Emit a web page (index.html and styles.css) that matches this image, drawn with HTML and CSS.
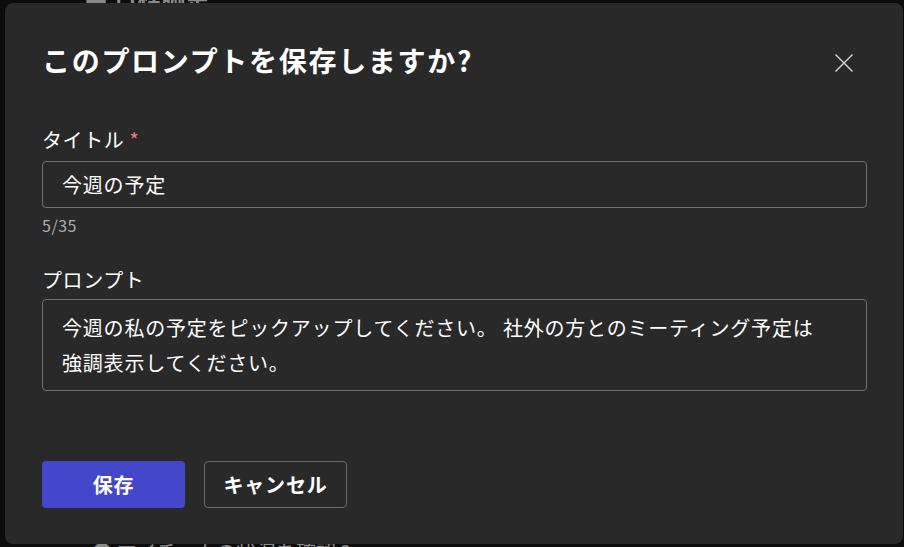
FILE: index.html
```html
<!DOCTYPE html>
<html lang="ja">
<head>
<meta charset="utf-8">
<link rel="stylesheet" href="styles.css">
</head>
<body>
<div class="backdrop">
  <div class="bg-line bg-top">■ 日程調整</div>
  <div class="bg-line bg-bottom">● マイチームの状況を確認 2</div>
</div>
<div class="dialog" role="dialog">
  <div class="header">
    <h1 class="title">このプロンプトを保存しますか?</h1>
    <button class="close" aria-label="閉じる">
      <svg width="20" height="20" viewBox="0 0 20 20"><path d="M1.5 1.5 L18.5 18.5 M18.5 1.5 L1.5 18.5" stroke="#d6d6d6" stroke-width="1.4" fill="none"/></svg>
    </button>
  </div>
  <div class="field">
    <label class="label">タイトル <span class="req">*</span></label>
    <div class="input">今週の予定</div>
    <div class="counter">5/35</div>
  </div>
  <div class="field field-prompt">
    <label class="label">プロンプト</label>
    <div class="textarea">今週の私の予定をピックアップしてください。 社外の方とのミーティング予定は<br>強調表示してください。</div>
  </div>
  <div class="actions">
    <button class="btn btn-primary">保存</button>
    <button class="btn btn-secondary">キャンセル</button>
  </div>
</div>
</body>
</html>
```

FILE: styles.css
```css
* { box-sizing: border-box; }
html, body {
  margin: 0;
  padding: 0;
  width: 904px;
  height: 547px;
  overflow: hidden;
}
body {
  background: #0c0c0c;
  font-family: "Noto Sans CJK JP", "Noto Sans", sans-serif;
  color: #ffffff;
  position: relative;
}
.backdrop {
  height: 547px;
  display: flex;
  flex-direction: column;
  justify-content: space-between;
  color: #8a8a8a;
  font-size: 24px;
  font-weight: 700;
}
.bg-line { line-height: 30px; }
.bg-top { margin-top: -19px; padding-left: 84px; }
.bg-bottom { margin-bottom: -20px; padding-left: 92px; font-size: 20px; font-weight: 400; }

.dialog {
  position: absolute;
  left: 5px;
  top: 3px;
  width: 898px;
  height: 541px;
  background: #292929;
  border-radius: 8px;
  padding: 40px 36px 0 37px;
  display: flex;
  flex-direction: column;
}
.header {
  display: flex;
  align-items: center;
  justify-content: space-between;
  height: 40px;
}
.title {
  margin: 0;
  align-self: flex-start;
  font-size: 28px;
  font-weight: 700;
  line-height: 34px;
  letter-spacing: 1.7px;
}
.close {
  background: none;
  border: 0;
  padding: 0;
  width: 20px;
  height: 20px;
  margin-right: 13px;
  display: flex;
}
.field { display: flex; flex-direction: column; }
.label {
  margin-top: 43px;
  font-size: 20px;
  line-height: 28px;
  letter-spacing: 0.6px;
  color: #ffffff;
}
.field-prompt .label { margin-top: 30px; }
.req { color: #e87979; }
.input {
  margin-top: 7px;
  height: 47px;
  border: 1px solid #6f6f6f;
  border-radius: 4px;
  padding: 0 19px;
  display: flex;
  align-items: center;
  font-size: 20px;
  letter-spacing: 0.8px;
}
.counter {
  margin-top: 6px;
  font-size: 16px;
  line-height: 22px;
  letter-spacing: 0.5px;
  color: #adadad;
}
.textarea {
  margin-top: 5px;
  border: 1px solid #6f6f6f;
  border-radius: 4px;
  padding: 10px 19px;
  font-size: 20px;
  line-height: 35px;
  letter-spacing: 0.8px;
}
.actions {
  margin-top: 70px;
  display: flex;
  gap: 19px;
}
.btn {
  width: 143px;
  height: 47px;
  border-radius: 4px;
  font-family: inherit;
  font-size: 20px;
  font-weight: 700;
  letter-spacing: 0.8px;
  color: #ffffff;
  padding: 0;
}
.btn-primary {
  background: #4447c9;
  border: 0;
}
.btn-secondary {
  background: transparent;
  border: 1px solid #6b6b6b;
}
```
